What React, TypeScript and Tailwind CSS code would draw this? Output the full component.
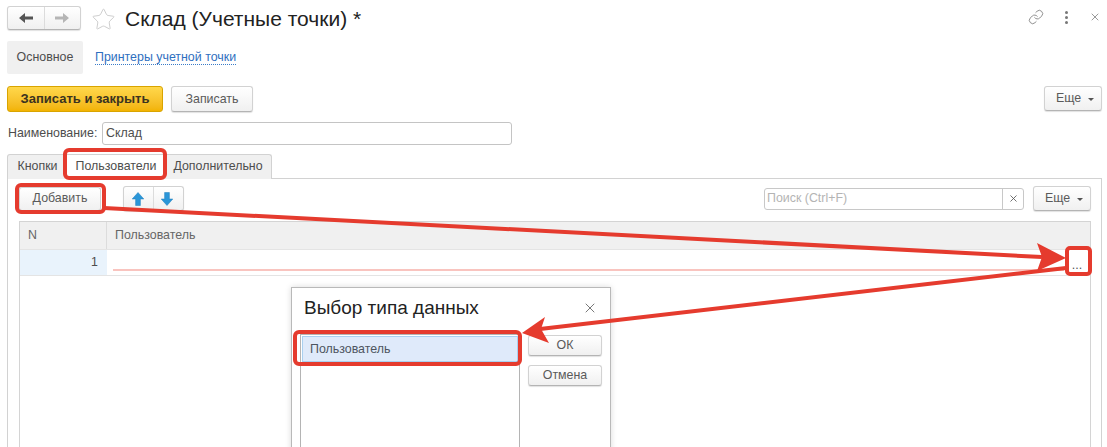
import { Link, Star, X } from "lucide-react";

const btn =
  "flex items-center justify-center rounded-[3px] border border-[#d2d2d2] border-b-[#b4b4b4] bg-gradient-to-b from-white to-[#f0f0f0] text-[#5a5a5a] shadow-[0_1px_1px_rgba(0,0,0,0.12)]";

function NavArrow({ left, color }: { left?: boolean; color: string }) {
  return (
    <svg width="14" height="12" viewBox="0 0 14 12" className={left ? "" : "rotate-180"}>
      <path d="M0 6 L6 1 V4.4 H14 V7.6 H6 V11 Z" fill={color} />
    </svg>
  );
}

function BlueArrow({ down }: { down?: boolean }) {
  return (
    <svg width="12" height="14" viewBox="0 0 12 14" className={down ? "rotate-180" : ""}>
      <path d="M6 0.5 L11.8 7 H8.4 V13.5 H3.6 V7 H0.2 Z" fill="#2b96d8" stroke="#1f7fbd" strokeWidth="0.5" />
    </svg>
  );
}

function MoreButton({ className }: { className: string }) {
  return (
    <div className={`${btn} ${className} h-[25px] w-[58px] gap-[7px] pl-[4px]`}>
      <span>Еще</span>
      <span className="mt-[1px] h-0 w-0 border-x-[3px] border-t-[3px] border-x-transparent border-t-[#555]" />
    </div>
  );
}

function Overlays() {
  return (
    <div className="pointer-events-none absolute inset-0 z-20">
      <svg className="absolute left-0 top-0" width="1107" height="447">
        <path d="M104 208 L1042 257" stroke="#e53b2e" strokeWidth="4" fill="none" />
        <path d="M1066 258 L1037 243 L1042 257 L1037 271 Z" fill="#e53b2e" />
        <path d="M1066 268 L540 329" stroke="#e53b2e" strokeWidth="4" fill="none" />
        <path d="M522 333 L545 317 L541 329 L549 343 Z" fill="#e53b2e" />
      </svg>
      <div className="absolute left-[63px] top-[148px] h-[32px] w-[104px] rounded-[6px] border-[4px] border-[#e53b2e]" />
      <div className="absolute left-[15px] top-[183px] h-[31px] w-[91px] rounded-[6px] border-[4px] border-[#e53b2e]" />
      <div className="absolute left-[1065px] top-[246px] h-[30px] w-[27px] rounded-[5px] border-[4px] border-[#e53b2e]" />
      <div className="absolute left-[293px] top-[330px] h-[36px] w-[229px] rounded-[6px] border-[4px] border-[#e53b2e]" />
    </div>
  );
}

function TypeDialog() {
  return (
    <div className="absolute left-[291px] top-[287px] z-10 h-[170px] w-[320px] border border-[#b9b9b9] bg-white px-[8px] shadow-[0_0_6px_rgba(0,0,0,0.15)]">
      <div className="flex h-[46px] items-center justify-between pb-[6px] pl-[4px] pr-[4px]">
        <span className="text-[19px] text-[#222]">Выбор типа данных</span>
        <X size={16} strokeWidth={1.2} className="text-[#555]" />
      </div>
      <div className="flex gap-[8px]">
        <div className="h-[120px] w-[220px] border border-[#b4b4b4] p-px">
          <div className="flex h-[26px] items-center border border-[#a9d0f0] bg-[#dfeafa] pl-[7px] text-[#4d5560]">
            Пользователь
          </div>
        </div>
        <div className="flex w-[74px] flex-col gap-[9px] pt-px">
          <div className={`${btn} h-[21px]`}>ОК</div>
          <div className={`${btn} h-[21px]`}>Отмена</div>
        </div>
      </div>
    </div>
  );
}

export default function App() {
  return (
    <div className="relative h-[447px] w-[1107px] overflow-hidden bg-white font-['Liberation_Sans',Arial,sans-serif] text-[12.4px] text-[#4d4d4d]">
      <div className="flex h-[41px] items-start pl-[7px] pt-[6px]">
        <div className={`${btn} h-[24px] w-[74px]`}>
          <div className="flex flex-1 justify-center border-r border-[#dcdcdc] py-[5px]">
            <NavArrow left color="#555" />
          </div>
          <div className="flex flex-1 justify-center py-[5px]">
            <NavArrow color="#b5b5b5" />
          </div>
        </div>
        <Star size={25} strokeWidth={0.8} className="ml-[10px] mt-[1px] text-[#c4c4c4]" />
        <span className="ml-[9px] text-[21px] leading-[25px] text-[#222]">Склад (Учетные точки) *</span>
        <div className="ml-auto flex items-center gap-[21px] pr-[6px] pt-[3px] text-[#808080]">
          <Link size={16} strokeWidth={1.3} />
          <div className="flex flex-col gap-[2px]">
            <span className="h-[3px] w-[3px] rounded-full bg-[#777]" />
            <span className="h-[3px] w-[3px] rounded-full bg-[#777]" />
            <span className="h-[3px] w-[3px] rounded-full bg-[#777]" />
          </div>
          <X size={12} strokeWidth={1.6} />
        </div>
      </div>

      <div className="flex h-[33px] items-center px-[7px]">
        <div className="flex h-[33px] w-[76px] items-center justify-center rounded-[2px] bg-[#f0f0f0]">Основное</div>
        <span className="ml-[12px] border-b border-dotted border-[#3a7bc8] leading-[13px] text-[#2f6fc0]">
          Принтеры учетной точки
        </span>
      </div>

      <div className="mt-[12px] flex items-start gap-[8px] px-[7px]">
        <div className="flex h-[26px] w-[156px] items-center justify-center rounded-[3px] border border-[#d9a400] bg-gradient-to-b from-[#ffd84a] to-[#f2b300] text-[13px] font-bold text-[#3b3320]">
          Записать и закрыть
        </div>
        <div className={`${btn} h-[26px] w-[82px]`}>Записать</div>
        <MoreButton className="ml-auto mr-[-2px]" />
      </div>

      <div className="mt-[10px] flex h-[23px] items-center px-[8px]">
        <span className="w-[94px]">Наименование:</span>
        <div className="flex h-[23px] w-[410px] items-center rounded-[3px] border border-[#c4c4c4] pl-[3px]">Склад</div>
      </div>

      <div className="relative z-10 ml-[7px] mt-[9px] -mb-px flex h-[25px] w-[265px] rounded-t-[3px] border border-b-0 border-[#d2d2d2] bg-[#f0f0f0]">
        <span className="flex w-[59px] items-center justify-center pb-px">Кнопки</span>
        <span className="flex w-[98px] items-center justify-center bg-white pb-px">Пользователи</span>
        <span className="flex flex-1 items-center justify-center pb-px">Дополнительно</span>
      </div>

      <div className="ml-[7px] h-[300px] w-[1095px] border border-[#d2d2d2] pl-[11px] pr-[10px]">
        <div className="mt-[7px] flex h-[25px] items-center">
          <div className={`${btn} h-[24px] w-[82px]`}>Добавить</div>
          <div className={`${btn} ml-[22px] h-[25px] w-[61px]`}>
            <div className="flex flex-1 justify-center border-r border-[#dcdcdc] py-[5px] pr-[1px]">
              <BlueArrow />
            </div>
            <div className="flex flex-1 justify-center py-[5px] pr-[2px]">
              <BlueArrow down />
            </div>
          </div>
          <div className="ml-auto flex h-[22px] w-[260px] items-center rounded-[3px] border border-[#c8c8c8]">
            <span className="flex-1 pl-[2px] text-[#b4b4b4]">Поиск (Ctrl+F)</span>
            <div className="flex h-full w-[21px] items-center justify-center border-l border-[#c8c8c8]">
              <X size={11} strokeWidth={1.8} className="text-[#555]" />
            </div>
          </div>
          <MoreButton className="ml-[9px]" />
        </div>

        <div className="mt-[10px] h-[240px] w-[1072px] border border-[#d4d4d4]">
          <div className="flex h-[28px] items-center border-b border-[#e4e4e4] bg-[#f0f0f0]">
            <span className="w-[87px] border-r border-[#dcdcdc] pl-[8px] leading-[27px] text-[#666]">N</span>
            <span className="pl-[8px] text-[#666]">Пользователь</span>
          </div>
          <div className="flex h-[26px] border-b border-[#e4e4e4]">
            <div className="flex w-[87px] items-center justify-end bg-[#e9f3fc] pr-[9px]">1</div>
            <div className="ml-[6px] flex flex-1 items-end pb-[5px]">
              <div className="mb-[-1px] h-[2px] flex-1 bg-[#f9c4bf]" />
              <span className="w-[26px] pb-[1px] text-center leading-[8px] text-[#555]">...</span>
            </div>
          </div>
        </div>
      </div>

      <TypeDialog />
      <Overlays />
    </div>
  );
}
